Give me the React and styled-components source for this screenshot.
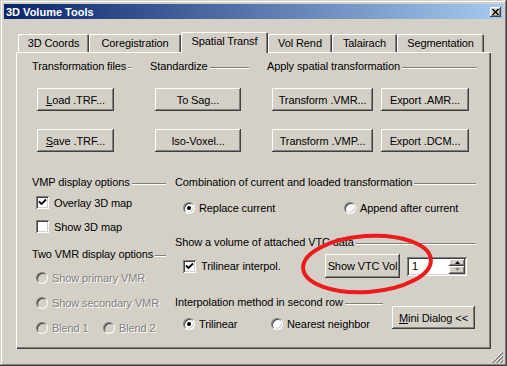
import React from "react";
import styled, { createGlobalStyle } from "styled-components";

const GlobalStyle = createGlobalStyle`
  html, body {
    margin: 0;
    padding: 0;
    background: #d4d0c8;
  }
  body {
    font-family: "Liberation Sans", Arial, sans-serif;
    font-size: 11px;
    letter-spacing: -0.1px;
    color: #000;
  }
`;

const raised = `
  box-shadow: inset -1px -1px #404040, inset 1px 1px #ffffff,
    inset -2px -2px #808080, inset 2px 2px #d4d0c8;
`;

const sunken = `
  box-shadow: inset 1px 1px #808080, inset -1px -1px #ffffff,
    inset 2px 2px #404040, inset -2px -2px #d4d0c8;
`;

const Window = styled.div`
  position: relative;
  box-sizing: border-box;
  width: 507px;
  height: 366px;
  padding: 4px 4px 0 4px;
  background: #d4d0c8;
  box-shadow: inset -1px -1px #404040, inset 1px 1px #d4d0c8,
    inset -2px -2px #808080, inset 2px 2px #ffffff;
  display: flex;
  flex-direction: column;
`;

const TitleBar = styled.div`
  height: 15px;
  padding: 0 2px;
  display: flex;
  align-items: center;
  justify-content: space-between;
  background: linear-gradient(to right, #0a246a, #a6caf0);
  color: #fff;
  font-weight: bold;
  font-size: 11px;
  letter-spacing: 0;
`;

const CloseButton = styled.div`
  width: 11px;
  height: 10px;
  background: #d4d0c8;
  ${raised}
  display: flex;
  align-items: center;
  justify-content: center;
`;

const TabRow = styled.div`
  display: flex;
  align-items: flex-end;
  height: 20px;
  margin: 13px 0 0 14px;
`;

const Tab = styled.div`
  position: relative;
  z-index: ${(p) => (p.$active ? 2 : 0)};
  box-sizing: border-box;
  width: ${(p) => p.$w}px;
  height: ${(p) => (p.$active ? 21 : 18)}px;
  margin-bottom: ${(p) => (p.$active ? -1 : 0)}px;
  padding-bottom: ${(p) => (p.$active ? 3 : 0)}px;
  background: #d4d0c8;
  border-radius: 2px 2px 0 0;
  box-shadow: inset 1px 1px #ffffff, inset -1px 0 #404040, inset -2px 0 #808080;
  display: flex;
  align-items: center;
  justify-content: center;
  white-space: nowrap;
`;

const Panel = styled.div`
  position: relative;
  box-sizing: border-box;
  width: 475px;
  height: 297px;
  margin-left: 12px;
  padding: 8px 0 0 16px;
  background: #d4d0c8;
  box-shadow: inset 1px 1px #ffffff, inset -1px -1px #404040,
    inset -2px -2px #808080;
`;

const TopRow = styled.div`
  display: flex;
  gap: 18px;
`;

const Group = styled.div`
  width: ${(p) => p.$w}px;
  display: flex;
  flex-direction: column;
`;

const Heading = styled.div`
  display: flex;
  align-items: center;
  height: 13px;
  line-height: 13px;
  margin-top: ${(p) => p.$mt || 0}px;
  white-space: nowrap;

  &::after {
    content: "";
    flex: 1;
    height: 0;
    margin: 3px 0 0 2px;
    border-top: 1px solid #808080;
    border-bottom: 1px solid #ffffff;
  }
`;

const ButtonGrid = styled.div`
  display: grid;
  grid-template-columns: ${(p) => p.$cols};
  column-gap: 8px;
  row-gap: 18px;
  margin-top: 15px;
  padding-left: 5px;
`;

const Button = styled.button`
  box-sizing: border-box;
  width: ${(p) => p.$w}px;
  height: ${(p) => p.$h || 23}px;
  margin-top: ${(p) => p.$mt || 0}px;
  padding: 0;
  border: none;
  background: #d4d0c8;
  font-family: inherit;
  font-size: 11px;
  letter-spacing: inherit;
  color: #000;
  white-space: nowrap;
  ${raised}
`;

const Columns = styled.div`
  display: flex;
  gap: 9px;
  margin-top: 24px;
`;

const Column = styled.div`
  width: ${(p) => p.$w}px;
  display: flex;
  flex-direction: column;
`;

const OptionRow = styled.div`
  display: flex;
  align-items: center;
  height: 13px;
  margin-top: ${(p) => p.$mt || 0}px;
  padding-left: ${(p) => p.$pl}px;
`;

const Option = styled.label`
  display: flex;
  align-items: center;
  gap: ${(p) => (p.$check ? 5 : 4)}px;
  width: ${(p) => (p.$w ? `${p.$w}px` : "auto")};
  flex-shrink: 0;
  white-space: nowrap;
  color: ${(p) => (p.$disabled ? "#808080" : "#000")};
  text-shadow: ${(p) => (p.$disabled ? "1px 1px #ffffff" : "none")};
`;

const CheckBox = styled.span`
  box-sizing: border-box;
  width: 13px;
  height: 13px;
  background: #fff;
  ${sunken}
  display: flex;
  align-items: center;
  justify-content: center;
`;

const Radio = styled.span`
  position: relative;
  box-sizing: border-box;
  width: 12px;
  height: 12px;
  border-radius: 50%;
  background: ${(p) => (p.$disabled ? "#d4d0c8" : "#ffffff")};
  border: 1px solid;
  border-color: #808080 #ffffff #ffffff #808080;
  box-shadow: inset 1px 1px #404040, inset -1px -1px #d4d0c8;

  &::after {
    content: "";
    display: ${(p) => (p.$on ? "block" : "none")};
    position: absolute;
    left: 3px;
    top: 3px;
    width: 4px;
    height: 4px;
    border-radius: 50%;
    background: #000;
  }
`;

const VtcRow = styled.div`
  display: flex;
  align-items: center;
  height: 24px;
  margin-top: 5px;
  padding-left: 8px;
`;

const Spin = styled.div`
  box-sizing: border-box;
  display: flex;
  width: 60px;
  height: 19px;
  margin-left: 7px;
  padding: 2px;
  background: #fff;
  ${sunken}
`;

const SpinValue = styled.div`
  flex: 1;
  padding-left: 3px;
  line-height: 15px;
`;

const SpinButtons = styled.div`
  display: flex;
  flex-direction: column;
  width: 16px;
`;

const SpinButton = styled.div`
  flex: 1;
  background: #d4d0c8;
  ${raised}
  display: flex;
  align-items: center;
  justify-content: center;
`;

const BottomRow = styled.div`
  display: flex;
  margin-top: 18px;
`;

const MiniButton = styled(Button)`
  margin-left: 9px;
`;

const Footer = styled.div`
  flex: 1;
  display: flex;
  justify-content: flex-end;
  align-items: flex-end;
  padding-bottom: 3px;
`;

const Ellipse = styled.svg`
  position: absolute;
  left: 298px;
  top: 230px;
  pointer-events: none;
`;

const Check = () => (
  <svg width="9" height="9" viewBox="0 0 9 9">
    <path d="M1 3.5 L3.5 6 L8 1.5" fill="none" stroke="#000" strokeWidth="1.8" />
  </svg>
);

const Arrow = ({ up, color }) => (
  <svg width="5" height="3" viewBox="0 0 5 3">
    <path d={up ? "M0 3 L2.5 0 L5 3 Z" : "M0 0 L2.5 3 L5 0 Z"} fill={color} />
  </svg>
);

const CheckOption = ({ checked, children, w }) => (
  <Option $check $w={w}>
    <CheckBox>{checked && <Check />}</CheckBox>
    {children}
  </Option>
);

const RadioOption = ({ on, disabled, children, w }) => (
  <Option $w={w} $disabled={disabled}>
    <Radio $on={on} $disabled={disabled} />
    {children}
  </Option>
);

const tabs = [
  { label: "3D Coords", w: 71 },
  { label: "Coregistration", w: 92 },
  { label: "Spatial Transf", w: 87, active: true },
  { label: "Vol Rend", w: 64 },
  { label: "Talairach", w: 65 },
  { label: "Segmentation", w: 87 },
];

export default function App() {
  return (
    <>
      <GlobalStyle />
      <Window>
        <TitleBar>
          <span>3D Volume Tools</span>
          <CloseButton>
            <svg width="7" height="6" viewBox="0 0 7 6">
              <path d="M0.5 0 L6.5 6 M6.5 0 L0.5 6" stroke="#000" strokeWidth="1.4" />
            </svg>
          </CloseButton>
        </TitleBar>

        <TabRow>
          {tabs.map((t) => (
            <Tab key={t.label} $w={t.w} $active={t.active}>
              {t.label}
            </Tab>
          ))}
        </TabRow>

        <Panel>
          <TopRow>
            <Group $w={100}>
              <Heading>Transformation files</Heading>
              <ButtonGrid $cols="77px">
                <Button $w={77}>
                  <u>L</u>oad .TRF...
                </Button>
                <Button $w={77}>
                  <u>S</u>ave .TRF...
                </Button>
              </ButtonGrid>
            </Group>
            <Group $w={99}>
              <Heading>Standardize</Heading>
              <ButtonGrid $cols="86px">
                <Button $w={86}>To Sag...</Button>
                <Button $w={86}>Iso-Voxel...</Button>
              </ButtonGrid>
            </Group>
            <Group $w={210}>
              <Heading>Apply spatial transformation</Heading>
              <ButtonGrid $cols="101px 88px">
                <Button $w={101}>Transform .VMR...</Button>
                <Button $w={88}>Export .AMR...</Button>
                <Button $w={101}>Transform .VMP...</Button>
                <Button $w={88}>Export .DCM...</Button>
              </ButtonGrid>
            </Group>
          </TopRow>

          <Columns>
            <Column $w={134}>
              <Heading>VMP display options</Heading>
              <OptionRow $mt={7} $pl={4}>
                <CheckOption checked>Overlay 3D map</CheckOption>
              </OptionRow>
              <OptionRow $mt={11} $pl={4}>
                <CheckOption>Show 3D map</CheckOption>
              </OptionRow>
              <Heading $mt={15}>Two VMR display options</Heading>
              <OptionRow $mt={10} $pl={4}>
                <RadioOption disabled>Show primary VMR</RadioOption>
              </OptionRow>
              <OptionRow $mt={12} $pl={4}>
                <RadioOption disabled>Show secondary VMR</RadioOption>
              </OptionRow>
              <OptionRow $mt={12} $pl={4}>
                <RadioOption disabled w={67}>
                  Blend 1
                </RadioOption>
                <RadioOption disabled>Blend 2</RadioOption>
              </OptionRow>
            </Column>

            <Column $w={301}>
              <Heading>Combination of current and loaded transformation</Heading>
              <OptionRow $mt={12} $pl={8}>
                <RadioOption on w={161}>
                  Replace current
                </RadioOption>
                <RadioOption>Append after current</RadioOption>
              </OptionRow>
              <Heading $mt={22}>Show a volume of attached VTC data</Heading>
              <VtcRow>
                <CheckOption checked w={142}>
                  Trilinear interpol.
                </CheckOption>
                <Button $w={75} $h={24}>
                  Show VTC Vol
                </Button>
                <Spin>
                  <SpinValue>1</SpinValue>
                  <SpinButtons>
                    <SpinButton>
                      <Arrow up color="#000" />
                    </SpinButton>
                    <SpinButton>
                      <Arrow color="#808080" />
                    </SpinButton>
                  </SpinButtons>
                </Spin>
              </VtcRow>
              <BottomRow>
                <Column $w={208}>
                  <Heading>Interpolation method in second row</Heading>
                  <OptionRow $mt={8} $pl={8}>
                    <RadioOption on w={88}>
                      Trilinear
                    </RadioOption>
                    <RadioOption>Nearest neighbor</RadioOption>
                  </OptionRow>
                </Column>
                <MiniButton $w={83} $mt={10}>
                  <u>M</u>ini Dialog &lt;&lt;
                </MiniButton>
              </BottomRow>
            </Column>
          </Columns>
        </Panel>

        <Footer>
          <svg width="12" height="12" viewBox="0 0 12 12">
            <path d="M11 1 L1 11 M11 5 L5 11 M11 9 L9 11" stroke="#ffffff" strokeWidth="1" />
            <path d="M12 1.5 L1.5 12 M12 5.5 L5.5 12 M12 9.5 L9.5 12" stroke="#808080" strokeWidth="1.4" />
          </svg>
        </Footer>

        <Ellipse width="140" height="70" viewBox="0 0 140 70">
          <ellipse
            cx="69"
            cy="34"
            rx="64"
            ry="28"
            fill="none"
            stroke="#ec1c1c"
            strokeWidth="4"
            transform="rotate(-4 69 34)"
          />
        </Ellipse>
      </Window>
    </>
  );
}
